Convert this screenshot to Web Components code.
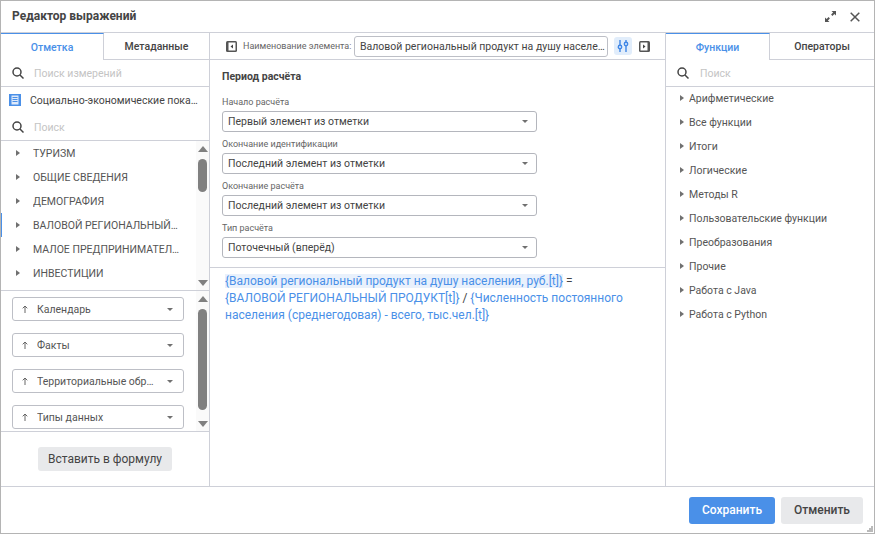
<!DOCTYPE html>
<html lang="ru"><head><meta charset="utf-8"><title>Редактор выражений</title>
<style>
html,body{margin:0;padding:0;background:#fff;width:875px;height:534px;overflow:hidden}
body{font-family:Roboto,"Liberation Sans",sans-serif;color:#444}
</style></head><body>
<x-dialog></x-dialog>
<template id="t-dialog">
<style>
:host{display:flex;flex-direction:column;box-sizing:border-box;width:875px;height:534px;border:1px solid #b4b4b4;background:#fff;position:relative}
.head{height:31px;flex:none;display:flex;align-items:center;padding:0 14px 0 11px;border-bottom:1px solid #ced0d8;box-sizing:content-box}
.title{font:700 12px Roboto,sans-serif;color:#444;flex:1;position:relative;top:-1px}
.head svg{display:block}
.head .exp{margin-right:14px}
.main{flex:1;display:flex;min-height:0}
.left{width:208px;flex:none;display:flex;flex-direction:column;border-right:1px solid #ced0d8}
.mid{flex:1;display:flex;flex-direction:column;min-width:0}
.right{width:208px;flex:none;display:flex;flex-direction:column;border-left:1px solid #ced0d8}
.doc{height:27px;flex:none;box-sizing:border-box;padding:0 0 1px 8px;display:flex;align-items:center;gap:9px;font-size:10.5px;color:#444;white-space:nowrap}
.docicon{width:12px;height:12px;flex:none;display:block}
.doctext{width:168px;overflow:hidden;text-overflow:ellipsis}
.tree{height:149px;flex:none;display:flex;border-top:1px solid #ced0d8;border-bottom:1px solid #ced0d8;margin-top:-1px}
.list{flex:1;min-width:0}
.chips{height:140px;flex:none;display:flex;border-bottom:1px solid #ced0d8}
.chipcol{flex:1;display:flex;flex-direction:column;gap:12px;padding:6px 12px 0 11px;min-width:0;overflow:hidden}
.insert{flex:1;display:flex;justify-content:center;padding-top:15px}
.bar{height:26px;flex:none;border-bottom:1px solid #ced0d8;display:flex;align-items:center;padding:0 0 0 16px}
.bar .lbl{font-size:9px;color:#666;margin:0 3px 0 6px;white-space:nowrap;width:108px;flex:none}
.bar .inp{width:254px;height:21px;box-sizing:border-box;border:1px solid #bdbfc6;border-radius:3px;font-size:10.500px;color:#444;padding:0 0 0 5px;line-height:19px;white-space:nowrap;overflow:hidden;text-overflow:ellipsis;margin-right:6px;flex:none}
.toggle{width:18px;height:18px;background:#e1edfb;border-radius:3px;display:flex;align-items:center;justify-content:center;flex:none;margin-right:7px}
.form{height:208px;flex:none;border-bottom:1px solid #ced0d8;padding:0 12px;box-sizing:border-box}
.form h3{margin:0;font:700 10.500px/14px Roboto,sans-serif;color:#444;padding-top:10px;height:26px}
.formula{flex:1;padding:5px 15px 0;font-size:12px;line-height:17px;color:#4a90e8;width:400px}
.formula .sel{background:#e9f1fc}
.formula .op{color:#444}
.rlist{flex:1;margin-top:-1px}
.foot{height:46px;flex:none;border-top:1px solid #ced0d8;display:flex;align-items:center;justify-content:flex-end;gap:6px;padding:0 11px 0 0}
.grip{position:absolute;right:1px;bottom:1px}
</style>
<div class="head"><span class="title">Редактор выражений</span>
<svg class="exp" width="11" height="11" viewBox="0 0 11 11" fill="#555"><path d="M6.500 0H11V4.500L9.400 2.900 7.400 4.900 6.100 3.600 8.100 1.600zM4.500 11H0V6.500L1.600 8.100 3.600 6.100 4.900 7.400 2.900 9.400z"/></svg>
<svg width="10" height="10" viewBox="0 0 10 10" stroke="#555" stroke-width="1.500" fill="none"><path d="M.7.7l8.600 8.600M9.300.7L.7 9.300"/></svg></div>
<div class="main">
<div class="left">
<x-tabs a="Отметка" b="Метаданные" w="103"></x-tabs>
<x-search text="Поиск измерений" border></x-search>
<div class="doc"><svg class="docicon" viewBox="0 0 12 12"><rect width="12" height="12" fill="#4a90e8"/><rect x="2.500" y="1.500" width="7" height="9" fill="#dfeafa"/><path d="M3.500 3.500h5M3.500 5.500h5M3.500 7.500h5" stroke="#4a90e8"/></svg><span class="doctext">Социально-экономические показатели</span></div>
<x-search text="Поиск" tight></x-search>
<div class="tree"><div class="list">
<x-row>ТУРИЗМ</x-row><x-row>ОБЩИЕ СВЕДЕНИЯ</x-row><x-row>ДЕМОГРАФИЯ</x-row><x-row mark>ВАЛОВОЙ РЕГИОНАЛЬНЫЙ ПРОДУКТ</x-row><x-row>МАЛОЕ ПРЕДПРИНИМАТЕЛЬСТВО</x-row><x-row>ИНВЕСТИЦИИ</x-row>
</div><x-scroll top="18" thumb="33"></x-scroll></div>
<div class="chips"><div class="chipcol"><x-chip>Календарь</x-chip><x-chip>Факты</x-chip><x-chip>Территориальные образования</x-chip><x-chip>Типы данных</x-chip></div><x-scroll top="18" thumb="101"></x-scroll></div>
<div class="insert"><x-btn>Вставить в формулу</x-btn></div>
</div>
<div class="mid">
<div class="bar">
<svg width="11" height="11" viewBox="0 0 11 11" style="flex:none"><rect width="11" height="11" rx="1.500" fill="#555"/><rect x="2.500" y="1.500" width="7" height="8" fill="#fff"/><path d="M7 3.500v4L4.500 5.500z" fill="#444"/></svg>
<span class="lbl">Наименование элемента:</span><div class="inp">Валовой региональный продукт на душу населения, руб.</div>
<div class="toggle"><svg width="12" height="12" viewBox="0 0 12 12" fill="none" stroke="#3f86e6" stroke-width="1.400"><path d="M3 0v5M3 9v3M9 0v2M9 6v6"/><circle cx="3" cy="7" r="1.700"/><circle cx="9" cy="4" r="1.700"/></svg></div>
<svg width="11" height="11" viewBox="0 0 11 11" style="flex:none"><rect width="11" height="11" rx="1.500" fill="#555"/><rect x="1.500" y="1.500" width="7" height="8" fill="#fff"/><path d="M4 3.500v4L6.500 5.500z" fill="#444"/></svg>
</div>
<div class="form"><h3>Период расчёта</h3>
<x-field label="Начало расчёта">Первый элемент из отметки</x-field>
<x-field label="Окончание идентификации">Последний элемент из отметки</x-field>
<x-field label="Окончание расчёта">Последний элемент из отметки</x-field>
<x-field label="Тип расчёта">Поточечный (вперёд)</x-field>
</div>
<div class="formula"><span class="sel">{Валовой региональный продукт на душу населения, руб.[t]}</span> <span class="op">=</span> {ВАЛОВОЙ РЕГИОНАЛЬНЫЙ ПРОДУКТ[t]} <span class="op">/</span> {Численность постоянного населения (среднегодовая) - всего, тыс.чел.[t]}</div>
</div>
<div class="right">
<x-tabs a="Функции" b="Операторы" w="104"></x-tabs>
<x-search text="Поиск" border wide></x-search>
<div class="rlist"><x-row lower>Арифметические</x-row><x-row lower>Все функции</x-row><x-row lower>Итоги</x-row><x-row lower>Логические</x-row><x-row lower>Методы R</x-row><x-row lower>Пользовательские функции</x-row><x-row lower>Преобразования</x-row><x-row lower>Прочие</x-row><x-row lower>Работа с Java</x-row><x-row lower>Работа с Python</x-row></div>
</div>
</div>
<div class="foot"><x-btn primary big>Сохранить</x-btn><x-btn big>Отменить</x-btn></div>
<svg class="grip" width="6" height="6" viewBox="0 0 6 6" fill="#a9a9a9"><path d="M4 0h2v2H4zM2 2h2v2H2zM4 2h2v2H4zM0 4h2v2H0zM2 4h2v2H2zM4 4h2v2H4z" opacity=".8"/></svg>
</template>
<script>
function el(name, render){
  customElements.define(name, class extends HTMLElement{
    connectedCallback(){ if(!this.shadowRoot){ this.attachShadow({mode:'open'}).innerHTML = render(this); } }
  });
}
const F='Roboto,"Liberation Sans",sans-serif';
customElements.define('x-dialog', class extends HTMLElement{
  connectedCallback(){ if(!this.shadowRoot){ this.attachShadow({mode:'open'}).appendChild(document.getElementById('t-dialog').content.cloneNode(true)); } }
});
el('x-tabs', h=>`<style>
:host{display:flex;height:27px;flex:none;font:500 10.500px ${F};box-sizing:border-box}
.t{display:flex;align-items:center;justify-content:center;box-sizing:border-box}
.a{width:${h.getAttribute('w')}px;border-top:1px solid #4a90e8;border-right:1px solid #ced0d8;color:#4a90e8}
.b{flex:1;border-bottom:1px solid #ced0d8;color:#444;border-top:1px solid transparent}
</style><div class="t a">${h.getAttribute('a')}</div><div class="t b">${h.getAttribute('b')}</div>`);
el('x-search', h=>`<style>
:host{display:flex;height:27px;flex:none;box-sizing:border-box;align-items:center;padding-left:11px;gap:${h.hasAttribute('wide')?11:10}px;${h.hasAttribute('border')?'border-bottom:1px solid #ced0d8;':''}${h.hasAttribute('tight')?'padding-bottom:1px;':''}font:10.500px ${F};color:#c4c4c4}
svg{display:block;flex:none}
</style><svg width="12" height="12" viewBox="0 0 12 12" fill="none" stroke="#444" stroke-width="1.500"><circle cx="5" cy="5" r="4"/><path d="M8 8l3.500 3.500"/></svg><span>${h.getAttribute('text')}</span>`);
el('x-row', h=>{const lo=h.hasAttribute('lower');return `<style>
:host{display:flex;height:24px;align-items:center;font:10.500px ${F};color:#555;padding-left:${lo?14:15}px;white-space:nowrap;box-sizing:border-box;${h.hasAttribute('mark')?'box-shadow:inset 1px 0 #4a90e8;':''}}
svg{display:block;flex:none;margin-right:${lo?5:13}px}
.t{overflow:hidden;text-overflow:ellipsis;width:${lo?180:147}px}
</style><svg width="4" height="6" viewBox="0 0 4 6" fill="#707070"><path d="M0 0l4 3-4 3z"/></svg><span class="t"><slot></slot></span>`});
el('x-scroll', h=>`<style>
:host{display:flex;flex-direction:column;align-items:center;width:13px;flex:none;background:#fafafa;position:relative;box-sizing:border-box;justify-content:space-between}
.u,.d{width:0;height:0;border-left:5px solid transparent;border-right:5px solid transparent}
.u{border-bottom:6px solid #808080;margin-top:5px}
.d{border-top:6px solid #808080;margin-bottom:4px}
.th{position:absolute;top:${h.getAttribute('top')}px;left:2px;width:9px;height:${h.getAttribute('thumb')}px;border-radius:5px;background:#808080}
</style><div class="u"></div><div class="th"></div><div class="d"></div>`);
el('x-chip', h=>`<style>
:host{display:flex;height:24px;flex:none;box-sizing:border-box;border:1px solid #bdbfc6;border-radius:3px;align-items:center;padding:0 10px 0 9px;font:10.500px ${F};color:#555;background:#fff;white-space:nowrap}
.ar{flex:none;display:block;margin-right:9px}
.t{flex:1;overflow:hidden;text-overflow:ellipsis;min-width:0;margin-right:10px}
.c{flex:none;width:0;height:0;border-left:3px solid transparent;border-right:3px solid transparent;border-top:3px solid #707070}
</style><svg class="ar" width="6" height="8" viewBox="0 0 6 8" fill="none" stroke="#666"><path d="M3 8V1M.7 3.300L3 1l2.300 2.300"/></svg><span class="t"><slot></slot></span><span class="c"></span>`);
el('x-field', h=>`<style>
:host{display:block;width:315px;font:10px ${F}}
.l{height:15px;line-height:13px;color:#666;font-size:9px;display:block}
.s{height:21px;box-sizing:border-box;border:1px solid #b4b6bd;border-radius:3px;display:flex;align-items:center;padding:0 8px 0 5px;font-size:10.500px;color:#444;margin-bottom:6px}
.t{flex:1}
.c{flex:none;width:0;height:0;border-left:3px solid transparent;border-right:3px solid transparent;border-top:3px solid #707070}
</style><span class="l">${h.getAttribute('label')}</span><div class="s"><span class="t"><slot></slot></span><span class="c"></span></div>`);
el('x-btn', h=>{const big=h.hasAttribute('big'),p=h.hasAttribute('primary');return `<style>
:host{display:inline-flex;align-items:center;justify-content:center;box-sizing:border-box;height:${big?27:24}px;width:${big?(p?86:82):134}px;border-radius:3px;background:${p?'#4a90e8':'#e8e9eb'};color:${p?'#fff':'#444'};font:${big?'500 12px':'12px'} ${F};white-space:nowrap}
</style><slot></slot>`});
</script>
</body></html>
